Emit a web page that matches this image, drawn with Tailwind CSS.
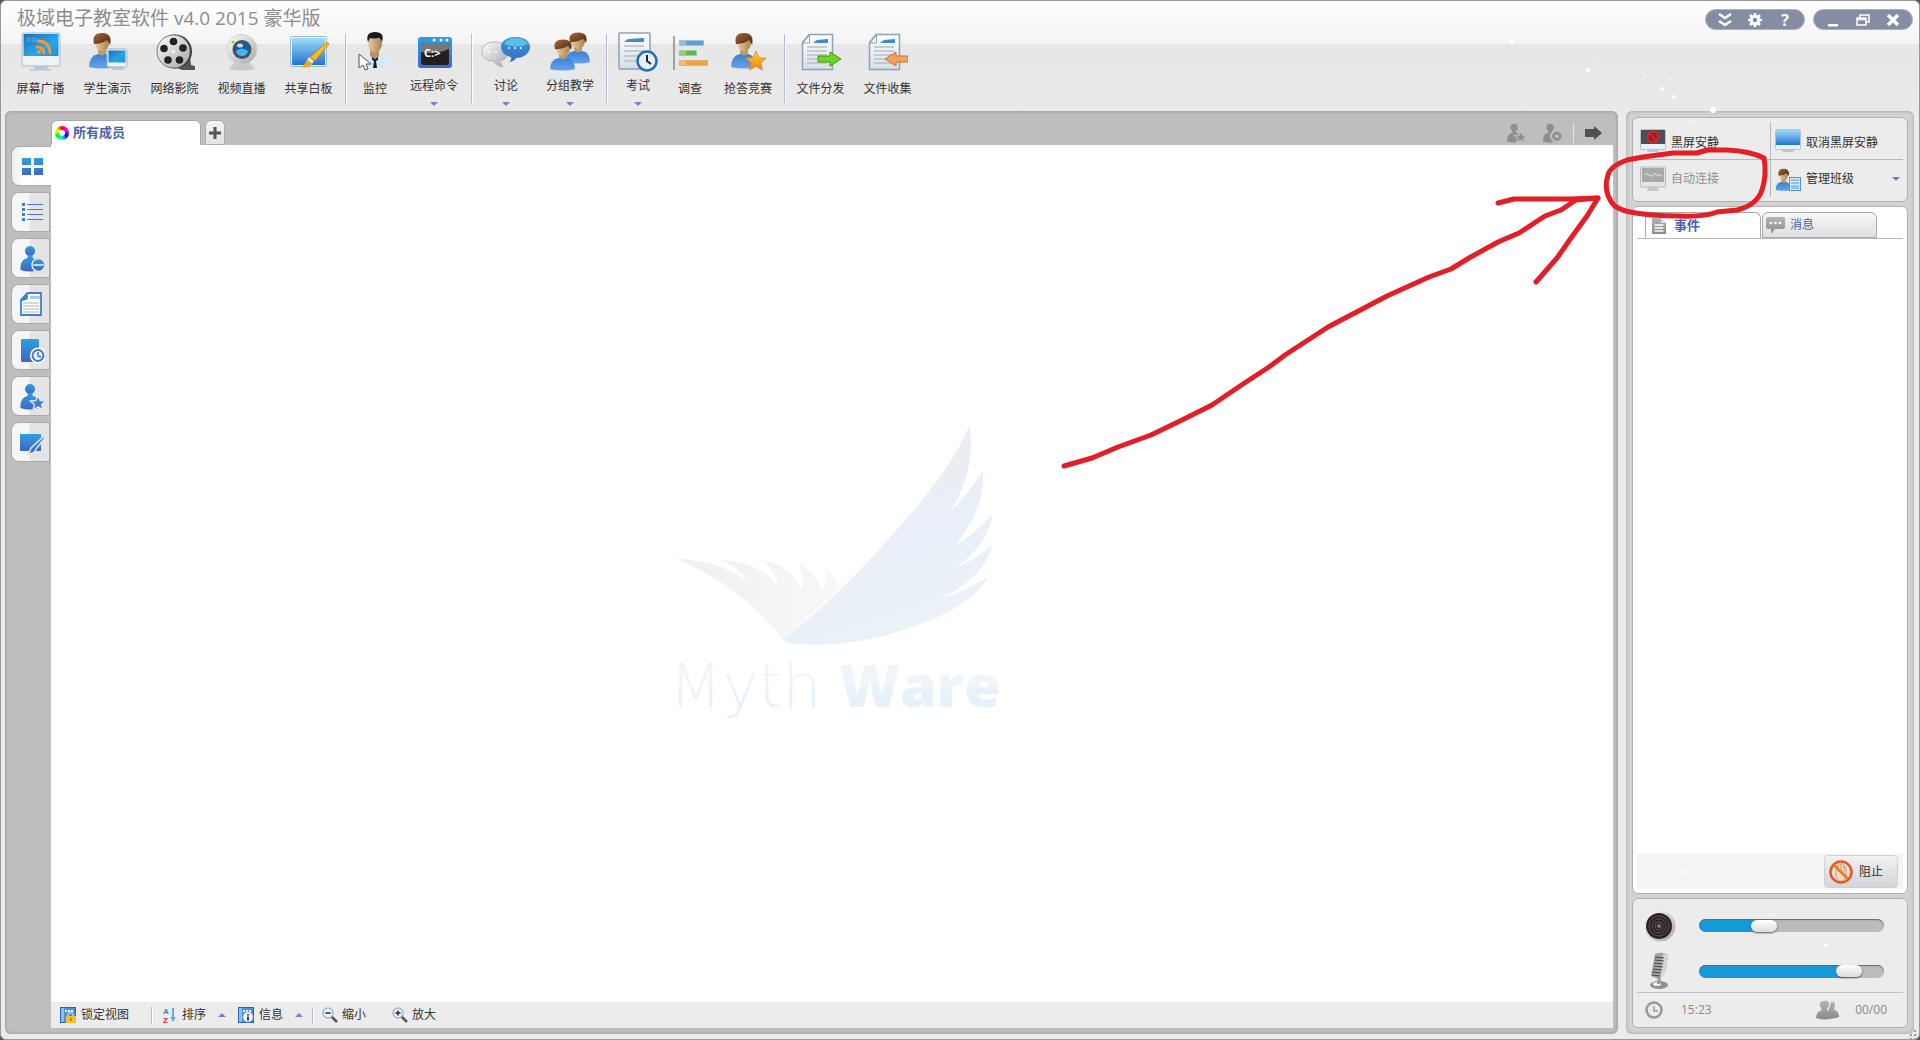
<!DOCTYPE html>
<html lang="zh-CN">
<head>
    <meta charset="UTF-8">
    <meta name="viewport" content="width=device-width, initial-scale=1.0">
    <title>极域电子教室软件 v4.0 2015 豪华版</title>
    <script src="https://cdn.jsdelivr.net/npm/@tailwindcss/browser@4"></script>
</head>
<body class="bg-[#555] font-['Open_Sans','Noto_Sans_CJK_SC',sans-serif] text-xs text-[#333]">

    <!-- shared gradients and icon parts -->
    <svg class="absolute w-0 h-0" aria-hidden="true">
        <defs>
            <linearGradient id="gBlue" x1="0" y1="0" x2="0" y2="1"><stop offset="0" stop-color="#2f9fe0"/><stop offset="1" stop-color="#3f68c4"/></linearGradient>
            <linearGradient id="gScreen" x1="0" y1="0" x2="0" y2="1"><stop offset="0" stop-color="#9fdcfb"/><stop offset="1" stop-color="#2173cf"/></linearGradient>
            <linearGradient id="gDark" x1="0" y1="0" x2="1" y2="1"><stop offset="0" stop-color="#1d6fb5"/><stop offset=".6" stop-color="#27a6ea"/><stop offset="1" stop-color="#1b8fdc"/></linearGradient>
            <linearGradient id="gShirt" x1="0" y1="0" x2="0" y2="1"><stop offset="0" stop-color="#3c7fd0"/><stop offset="1" stop-color="#62a4ec"/></linearGradient>
            <linearGradient id="gSkin" x1="0" y1="0" x2="1" y2="0"><stop offset="0" stop-color="#e8cda4"/><stop offset="1" stop-color="#a9814f"/></linearGradient>
            <linearGradient id="gHair" x1="0" y1="0" x2="1" y2="1"><stop offset="0" stop-color="#a4693a"/><stop offset="1" stop-color="#4a2510"/></linearGradient>
            <linearGradient id="gSilver" x1="0" y1="0" x2="1" y2="1"><stop offset="0" stop-color="#ffffff"/><stop offset="1" stop-color="#a3a6ab"/></linearGradient>
            <linearGradient id="gPaper" x1="0" y1="0" x2="0" y2="1"><stop offset="0" stop-color="#ffffff"/><stop offset="1" stop-color="#d3dfe8"/></linearGradient>
            <linearGradient id="gGold" x1="0" y1="0" x2="0" y2="1"><stop offset="0" stop-color="#ffd23c"/><stop offset="1" stop-color="#f0820f"/></linearGradient>
            <linearGradient id="gGray" x1="0" y1="0" x2="0" y2="1"><stop offset="0" stop-color="#b4b4b4"/><stop offset="1" stop-color="#8a8a8a"/></linearGradient>
            <g id="person">
                <path d="M1 37q0-11 9-13h8q8 2 8 13q-12 3-25 0z" fill="url(#gShirt)"/>
                <path d="M10 17h8v6q-4 5-8 0z" fill="#c19a68"/>
                <ellipse cx="14" cy="12.500" rx="7" ry="9" fill="url(#gSkin)"/>
                <path d="M6 14C4 6 8 3 14 3c7 0 10 4 8 12q-1-3-3-5q-5 4-13 4z" fill="url(#gHair)"/>
            </g>
            <g id="doc">
                <path d="M8 4.500h23.500v35h-30v-27z" fill="url(#gPaper)" stroke="#8da3b5" stroke-width="1.500"/>
                <path d="M8.500 5v8H2z" fill="#fff" stroke="#8da3b5"/>
                <path d="M12 13l4-3 11-1v4z" fill="#3d8dcb"/>
                <path d="M6 17h20M6 21h20M6 25h20M6 29h20M6 33h20" stroke="#b9c0c6" stroke-width="1.500"/>
            </g>
            <path id="star" d="M0-10 3-3.300l7.200.6-5.500 4.700L6.500 9 0 5.200-6.500 9l1.800-7-5.500-4.700 7.200-.6z"/>
            <g id="bust">
                <circle cx="11" cy="6" r="5"/>
                <path d="M8.500 10h5v3q5 1 6 5v7q-9 3-18 0q-1-10 7-12z"/>
            </g>
            <g id="arrowShape"><path d="M0 4h12V0l11 7-11 7v-4H0z"/></g>
        </defs>
    </svg>

    <div class="min-h-screen flex flex-col rounded-md border border-[#999] bg-[#ebebeb]">

        <!-- title bar and toolbar -->
        <header class="h-[110px] shrink-0 rounded-t-md bg-[linear-gradient(#ffffff_0,#f4f4f4_43px,#e7e7e7_43px,#e9e9e9_100%)]">
            <div class="flex justify-between h-[27px] pl-4 pr-[6px]">
                <h1 class="pt-px text-[19px] leading-8 text-[#8c8c8c]">极域电子教室软件 v4.0 2015 豪华版</h1>
                <div class="flex gap-2 pt-2 shrink-0">
                    <div class="flex items-center justify-around px-1 w-[100px] h-[21px] rounded-full bg-[#858da3] border border-[#a9b0cc]">
                        <button aria-label="收起"><svg class="w-4 h-4" viewBox="0 0 16 16" fill="none" stroke="#fff" stroke-width="2.500"><path d="M2 2l6 4 6-4M2 9l6 4 6-4"/></svg></button>
                        <button aria-label="设置"><svg class="w-4 h-4" viewBox="0 0 16 16"><circle cx="8" cy="8" r="3.700" fill="none" stroke="#fff" stroke-width="3"/><path d="M8 1v3M8 12v3M1 8h3M12 8h3M3 3l2 2M11 11l2 2M3 13l2-2M11 5l2-2" stroke="#fff" stroke-width="2.500"/></svg></button>
                        <button aria-label="帮助" class="w-4 text-base leading-4 font-bold text-white">?</button>
                    </div>
                    <div class="flex items-center justify-around px-1 w-[100px] h-[21px] rounded-full bg-[#858da3] border border-[#a9b0cc]">
                        <button aria-label="最小化"><svg class="w-4 h-4" viewBox="0 0 16 16"><path d="M3 12h10v2.500H3z" fill="#fff"/></svg></button>
                        <button aria-label="还原"><svg class="w-4 h-4" viewBox="0 0 16 16" fill="none" stroke="#fff" stroke-width="1.500"><path d="M5 6V3h9v7h-3"/><path d="M2 6h9v7H2zM2 7.500h9"/></svg></button>
                        <button aria-label="关闭"><svg class="w-4 h-4" viewBox="0 0 16 16"><path d="M3 3l10 10M13 3L3 13" stroke="#fff" stroke-width="3.500"/></svg></button>
                    </div>
                </div>
            </div>

            <nav class="flex pl-[6px] pt-[2px] whitespace-nowrap">
                <button class="w-[67px] flex flex-col items-center gap-[9px]">
                    <svg class="w-10 h-[42px]" viewBox="0 0 40 42"><path d="M14 34h12l1 5h3v1.500H9V39h4z" fill="#b7c9d6"/><rect x="1" y="3" width="38" height="33" rx="2" fill="#eef3f7" stroke="#a8bccb"/><rect x="2.500" y="4" width="35" height="22" fill="url(#gDark)"/><path d="M5 7h5v5H5zM11 7h4v5h-4z" fill="#fff" opacity=".15"/><g fill="none" stroke="#f19a3a" stroke-width="2.800" stroke-linecap="round"><path d="M17 11q11 0 12 12M16 17q6 0 7 6"/></g><circle cx="18" cy="22" r="2" fill="#f19a3a"/></svg>
                    <span class="leading-4">屏幕广播</span>
                </button>
                <button class="w-[67px] flex flex-col items-center gap-[9px]">
                    <svg class="w-10 h-[42px]" viewBox="0 0 40 42"><use href="#person"/><path d="M26 36h8l3 4H23z" fill="#bccbd7"/><rect x="19" y="19" width="20" height="18" rx="1.500" fill="#f0f4f8" stroke="#9fb3c4"/><rect x="20.500" y="20.500" width="17" height="12" fill="url(#gDark)"/></svg>
                    <span class="leading-4">学生演示</span>
                </button>
                <button class="w-[67px] flex flex-col items-center gap-[9px]">
                    <svg class="w-10 h-[42px]" viewBox="0 0 40 42"><path d="M22 38q10-2 13-12l1 9 4 1v4H27z" fill="#555"/><circle cx="20" cy="21.500" r="17" fill="#333"/><circle cx="18.500" cy="21.500" r="16.500" fill="url(#gSilver)" stroke="#777"/><g fill="#222"><circle cx="18.500" cy="11.500" r="3.800"/><circle cx="28" cy="18" r="3.800"/><circle cx="24.500" cy="30" r="3.800"/><circle cx="13" cy="30" r="3.800"/><circle cx="9" cy="18.500" r="3.800"/></g><circle cx="18.500" cy="21.500" r="1.500" fill="#fff"/></svg>
                    <span class="leading-4">网络影院</span>
                </button>
                <button class="w-[67px] flex flex-col items-center gap-[9px]">
                    <svg class="w-10 h-[42px]" viewBox="0 0 40 42"><path d="M12 33h16l5 6q-12 3-26 0z" fill="#c9cacd"/><circle cx="20" cy="19.500" r="15" fill="url(#gSilver)" stroke="#d2d2d2"/><circle cx="20" cy="19.500" r="9.500" fill="#4a5059"/><circle cx="20" cy="19.500" r="7" fill="#145f9f"/><path d="M14 21q6-5 12 0q-1 5-6 5t-6-5z" fill="#42b4f3"/><ellipse cx="18" cy="15.500" rx="3" ry="2" fill="#bcdcf2"/><circle cx="11" cy="12" r="1.500" fill="#6ee428"/></svg>
                    <span class="leading-4">视频直播</span>
                </button>
                <button class="w-[67px] flex flex-col items-center gap-[9px]">
                    <svg class="w-10 h-[42px]" viewBox="0 0 40 42"><rect x="1.500" y="6.500" width="36" height="30" rx="1" fill="#e8f2f8" stroke="#9dbbd0"/><rect x="3" y="8" width="33" height="27" fill="url(#gScreen)"/><path d="M38 12l2 2-14 17-5-4z" fill="#f9b81c" stroke="#b87a08" stroke-width=".7"/><path d="M20 27l5 4-2 3-5-4z" fill="#e8e4d8"/><path d="M18 30l5 4q-4 5-11 3q3-1 6-7z" fill="#f6a90f"/></svg>
                    <span class="leading-4">共享白板</span>
                </button>
                <div class="w-px h-[69px] mt-1 ml-[3px] mr-1 bg-[#b3bbdf] shadow-[1px_0_0_#fff]"></div>
                <button class="w-[50px] flex flex-col items-center gap-[9px]">
                    <svg class="w-10 h-[42px]" viewBox="0 0 40 42"><path d="M6 38q0-10 10-12h8q10 2 10 12z" fill="#d4e8f8"/><path d="M15 18h9v8q-4 5-9 0z" fill="#b8925f"/><path d="M17 27l3 2 3-2 0 3-2 1 1 7h-4l1-7-2-1z" fill="#1a1f2a"/><ellipse cx="20" cy="13" rx="7" ry="9.500" fill="url(#gSkin)"/><path d="M13 12q-3-10 7-10t7 10q-2-5-4-4-4 1-8 0z" fill="#1a1a1c"/><path d="M4 24v14l4-3 2 5 3-1-2-5h5z" fill="#fff" stroke="#555"/></svg>
                    <span class="leading-4">监控</span>
                </button>
                <button class="w-[68px] flex flex-col items-center">
                    <svg class="w-10 h-[42px]" viewBox="0 0 40 42"><rect x="4" y="7" width="34" height="31" rx="3" fill="url(#gBlue)"/><g fill="#fff"><circle cx="20" cy="10" r="1.500"/><circle cx="27" cy="10" r="1.500"/><circle cx="33" cy="10" r="1.500"/></g><rect x="7" y="13" width="28" height="22" rx="3" fill="#231f20"/><path d="M7 22v-6q0-3 3-3h22q3 0 3 3v3q-14 6-28 3z" fill="#777"/><text x="10" y="27" font-size="11" font-weight="700" fill="#fff" font-family="Open Sans, sans-serif">C:&gt;</text></svg>
                    <span class="mt-[6px] leading-4">远程命令</span>
                    <span class="mt-2 border-x-4 border-t-4 border-x-transparent border-t-[#7584bd]"></span>
                </button>
                <div class="w-px h-[69px] mt-1 ml-[3px] mr-[2px] bg-[#b3bbdf] shadow-[1px_0_0_#fff]"></div>
                <button class="w-[64px] flex flex-col items-center">
                    <svg class="w-[50px] h-[42px]" viewBox="0 0 50 42"><path d="M1 22c0-7 6-10 13-10s13 4 13 10-5 9-9 9l4 6q-7-1-9-6C6 31 1 28 1 22z" fill="url(#gSilver)" stroke="#b4b4bb"/><path d="M20 17c0-7 7-10 15-10s14 4 14 10-6 11-14 11q-1 3-7 4 3-2 2-5-10-2-10-10z" fill="url(#gBlue)"/><path d="M23 14q3-6 12-6t12 6q-12 5-24 0z" fill="#6fd0e8" opacity=".7"/><g fill="#fff"><circle cx="28" cy="18" r="1"/><circle cx="34" cy="18" r="1"/><circle cx="40" cy="18" r="1"/><circle cx="8" cy="22" r="1"/><circle cx="15" cy="22" r="1"/></g></svg>
                    <span class="mt-[6px] leading-4">讨论</span>
                    <span class="mt-2 border-x-4 border-t-4 border-x-transparent border-t-[#7584bd]"></span>
                </button>
                <button class="w-[64px] flex flex-col items-center">
                    <svg class="w-[42px] h-[42px]" viewBox="0 0 42 42"><g transform="translate(15)"><use href="#person" transform="scale(1 .87)"/></g><g transform="translate(0 7)"><use href="#person" transform="scale(1 .87)"/></g></svg>
                    <span class="mt-[6px] leading-4">分组教学</span>
                    <span class="mt-2 border-x-4 border-t-4 border-x-transparent border-t-[#7584bd]"></span>
                </button>
                <div class="w-px h-[69px] mt-1 ml-1 mr-[3px] bg-[#b3bbdf] shadow-[1px_0_0_#fff]"></div>
                <button class="w-[56px] flex flex-col items-center">
                    <svg class="w-10 h-[42px]" viewBox="0 0 40 42"><rect x="1" y="3" width="31" height="36" rx="1" fill="url(#gPaper)" stroke="#8da3b5" stroke-width="1.500"/><path d="M6 12l4-3 16-1v4z" fill="#3d8dcb"/><path d="M6 16h20M6 21h20M6 26h14M6 31h12" stroke="#b9c0c6" stroke-width="1.500"/><circle cx="29" cy="31" r="9.500" fill="#e3eff9" stroke="#2a6cae" stroke-width="2.500"/><path d="M29 25v6l4 3" fill="none" stroke="#223" stroke-width="2"/></svg>
                    <span class="mt-[6px] leading-4">考试</span>
                    <span class="mt-2 border-x-4 border-t-4 border-x-transparent border-t-[#7584bd]"></span>
                </button>
                <button class="w-[48px] flex flex-col items-center gap-[9px]">
                    <svg class="w-10 h-[42px]" viewBox="0 0 40 42"><path d="M4 6v34" stroke="#8a8a8a" stroke-width="1.500"/><rect x="9.500" y="10.500" width="24" height="5" fill="#5f9fd3" stroke="#9cc2e2"/><rect x="9.500" y="20.500" width="17" height="5" fill="#5db655" stroke="#9ad094"/><rect x="9.500" y="30.500" width="28" height="5" fill="#eda23c" stroke="#dcb47c"/><path d="M10 11h6v4h-6zM10 21h6v4h-6zM10 31h6v4h-6z" fill="#fff" opacity=".3"/></svg>
                    <span class="leading-4">调查</span>
                </button>
                <button class="w-[68px] flex flex-col items-center gap-[9px]">
                    <svg class="w-10 h-[42px]" viewBox="0 0 40 42"><use href="#person" x="2"/><use href="#star" x="28" y="31" fill="url(#gGold)" stroke="#e08a1a" stroke-width=".8"/></svg>
                    <span class="leading-4">抢答竞赛</span>
                </button>
                <div class="w-px h-[69px] mt-1 ml-[2px] mr-[2px] bg-[#b3bbdf] shadow-[1px_0_0_#fff]"></div>
                <button class="w-[67px] flex flex-col items-center gap-[9px]">
                    <svg class="w-10 h-[42px]" viewBox="0 0 40 42"><use href="#doc"/><use href="#arrowShape" x="17" y="22" fill="#6fd522" stroke="#3c9a10"/></svg>
                    <span class="leading-4">文件分发</span>
                </button>
                <button class="w-[67px] flex flex-col items-center gap-[9px]">
                    <svg class="w-10 h-[42px]" viewBox="0 0 40 42"><use href="#doc"/><g transform="translate(40 22) scale(-1 1)"><use href="#arrowShape" fill="#f3a163" stroke="#cf6f2c"/></g></svg>
                    <span class="leading-4">文件收集</span>
                </button>
            </nav>
        </header>

        <div class="flex-1 flex gap-2 pl-1 pr-[5px] pb-[5px]">

            <!-- member view -->
            <main class="flex-1 flex flex-col pr-[5px] pb-[6px] rounded-md bg-[#bebebe] shadow-[inset_0_0_3px_1px_#a0a0a0]">
                <div class="flex items-end h-[34px]">
                    <button class="flex items-center gap-1 ml-[46px] w-[150px] h-[25px] pl-[3px] pb-px rounded-t-md bg-white border border-b-0 border-[#a8a8a8] text-[13px] font-bold text-[#4a62ac]">
                        <span class="w-[14px] h-[14px] rounded-full p-1 bg-[conic-gradient(red,magenta,blue,cyan,lime,yellow,red)]"><span class="block w-full h-full rounded-full bg-white"></span></span>
                        所有成员
                    </button>
                    <button aria-label="添加" class="ml-[4px] w-[20px] h-[25px] rounded-t-md bg-linear-to-b from-[#f4f4f4] to-[#e2e2e2] border border-[#aaa] flex items-center justify-center">
                        <svg class="w-[14px] h-[14px]" viewBox="0 0 14 14"><path d="M7 1v12M1 7h12" stroke="#555" stroke-width="3"/></svg>
                    </button>
                    <div class="flex items-center gap-4 h-[25px] ml-auto mr-[11px]">
                        <button aria-label="保存班级"><svg class="w-5 h-5" viewBox="0 0 27 27" fill="#8e8e8e"><use href="#bust"/><use href="#star" transform="translate(20 19) scale(.8)" stroke="#bebebe" stroke-width="2"/></svg></button>
                        <button aria-label="设置班级"><svg class="w-5 h-5" viewBox="0 0 27 27" fill="#8e8e8e"><use href="#bust"/><circle cx="20" cy="18" r="4.500" fill="none" stroke="#bebebe" stroke-width="9"/><circle cx="20" cy="18" r="4.500" fill="#bebebe" stroke="#8e8e8e" stroke-width="3.500"/></svg></button>
                        <span class="w-px h-5 -mx-[5px] bg-[#e4e4e4]"></span>
                        <button aria-label="下一页"><svg class="w-[17px] h-[14px]" viewBox="0 0 17 14"><path d="M0 3h9V0l8 7-8 7v-3H0z" fill="#505050"/></svg></button>
                    </div>
                </div>

                <div class="flex-1 flex">
                    <aside class="w-[46px] shrink-0 pl-[6px] pt-px flex flex-col gap-[6px]">
                        <button aria-label="监控视图" class="w-[40px] h-10 pl-[6px] flex items-center rounded-l-lg bg-linear-to-r from-[#eee] to-white to-30% border border-r-0 border-[#aaa]"><svg class="w-[27px] h-[27px]" viewBox="0 0 27 27" fill="url(#gBlue)"><path d="M4 5h9v7H4zM16 5h9v7h-9zM4 15h9v7H4zM16 15h9v7h-9z"/></svg></button>
                        <button aria-label="列表视图" class="w-[39px] h-10 pl-[6px] flex items-center rounded-l-lg bg-linear-to-r from-[#f6f6f6] from-45% to-[#e4e4e4] to-50% border border-[#aaa]"><svg class="w-[27px] h-[27px]" viewBox="0 0 27 27" fill="#3f7fcf"><path d="M4 4h3v3H4zM4 9h3v3H4zM4 14h3v3H4zM4 19h3v3H4zM9 5h16v1H9zM9 10h16v1H9zM9 15h16v1H9zM9 20h16v1H9z"/></svg></button>
                        <button aria-label="策略" class="w-[39px] h-10 pl-[6px] flex items-center rounded-l-lg bg-linear-to-r from-[#f6f6f6] from-45% to-[#e4e4e4] to-50% border border-[#aaa]"><svg class="w-[27px] h-[27px]" viewBox="0 0 27 27" fill="url(#gBlue)"><use href="#bust" x="1"/><circle cx="20.500" cy="20" r="6.500" stroke="#e4e4e4" stroke-width="1.500"/><path d="M15.500 20h10" stroke="#fff" stroke-width="1.500"/></svg></button>
                        <button aria-label="报告" class="w-[39px] h-10 pl-[6px] flex items-center rounded-l-lg bg-linear-to-r from-[#f6f6f6] from-45% to-[#e4e4e4] to-50% border border-[#aaa]"><svg class="w-[27px] h-[27px]" viewBox="0 0 27 27"><path d="M10 2h13v22H3V9z" fill="#fff" stroke="#3f7fcf" stroke-width="1.800"/><path d="M2 9l7-8 1 6q-1 3-8 3z" fill="#2f86d4"/><path d="M12 5h10v3H12z" fill="#a9cbf0"/><path d="M5 12h16M5 15h16M5 18h16M5 21h16" stroke="#ccc" stroke-width="1.500"/></svg></button>
                        <button aria-label="历史" class="w-[39px] h-10 pl-[6px] flex items-center rounded-l-lg bg-linear-to-r from-[#f6f6f6] from-45% to-[#e4e4e4] to-50% border border-[#aaa]"><svg class="w-[27px] h-[27px]" viewBox="0 0 27 27"><rect x="3" y="2" width="18" height="23" rx="1" fill="url(#gBlue)"/><circle cx="20" cy="18.500" r="6.500" fill="#e9f1fa" stroke="#fff" stroke-width="3"/><circle cx="20" cy="18.500" r="5.500" fill="#e9f1fa" stroke="#3f74c8" stroke-width="1.800"/><path d="M20 15v4l3 1" fill="none" stroke="#3f74c8" stroke-width="1.500"/></svg></button>
                        <button aria-label="竞赛" class="w-[39px] h-10 pl-[6px] flex items-center rounded-l-lg bg-linear-to-r from-[#f6f6f6] from-45% to-[#e4e4e4] to-50% border border-[#aaa]"><svg class="w-[27px] h-[27px]" viewBox="0 0 27 27" fill="url(#gBlue)"><use href="#bust" x="1"/><use href="#star" transform="translate(20 20) scale(.75)" stroke="#e4e4e4" stroke-width="1.800"/></svg></button>
                        <button aria-label="白板" class="w-[39px] h-10 pl-[6px] flex items-center rounded-l-lg bg-linear-to-r from-[#f6f6f6] from-45% to-[#e4e4e4] to-50% border border-[#aaa]"><svg class="w-[27px] h-[27px]" viewBox="0 0 27 27" fill="url(#gBlue)"><path d="M2 5h21v17H2z"/><path d="M26 7l1 2-9 11q-1 5-8 5 2-3 3-6z" stroke="#e4e4e4" stroke-width="1.500"/></svg></button>
                    </aside>

                    <section class="flex-1 flex flex-col bg-white">
                        <div class="flex-1 flex items-center justify-center">
                            <!-- watermark -->
                            <svg class="w-[334px] h-[307px] overflow-visible" viewBox="75 63 1002 921">
                                <defs>
                                    <linearGradient id="wing" x1="0" y1="0" x2=".3" y2="1"><stop offset="0" stop-color="#e9ecef"/><stop offset=".6" stop-color="#e9eff8"/><stop offset="1" stop-color="#e9f2f7"/></linearGradient>
                                    <linearGradient id="wingLeft" x1="0" y1="0" x2="1" y2="0"><stop offset="0" stop-color="#efefef"/><stop offset="1" stop-color="#f8f8f8"/></linearGradient>
                                    <linearGradient id="wmText" x1="0" y1="0" x2="0" y2="1"><stop offset=".5" stop-color="#eff6fb"/><stop offset=".6" stop-color="#e6f1fa"/></linearGradient>
                                </defs>
                                <path fill="url(#wingLeft)" d="M108 479Q240 486 322 546Q300 505 243 482Q365 490 415 565Q410 520 368 484Q450 500 485 572Q495 530 474 492Q530 520 546 575Q562 540 556 508Q590 535 598 568L430 722Q290 550 108 479z"/>
                                <path fill="url(#wing)" d="M430 720Q560 620 700 470C850 310 950 180 987 80C1005 160 980 260 932 336Q990 280 1028 214C1038 290 1000 370 946 440Q1010 400 1058 346C1050 410 1000 470 946 508Q1010 480 1057 438C1040 510 980 560 902 598Q980 575 1043 534C1000 610 900 660 760 703C640 738 520 742 450 733Q436 730 430 720z"/>
                                <text x="88" y="924" font-size="184" font-weight="200" fill="url(#wmText)" font-family="DejaVu Sans Light, DejaVu Sans, sans-serif">Myth</text>
                                <text x="598" y="924" font-size="176" font-weight="900" fill="url(#wmText)" font-family="Open Sans, sans-serif">Ware</text>
                            </svg>
                        </div>
                        <div class="flex items-center h-[26px] pl-[9px] bg-[#ececec] whitespace-nowrap">
                            <button class="flex items-center gap-[5px]">
                                <svg class="w-4 h-4" viewBox="0 0 16 16"><rect x=".5" y=".5" width="15" height="15" fill="#4d8fe0" stroke="#2a62b8"/><path d="M1 1h3v14H1z" fill="#8cbcf2"/><path d="M5 3h2v2H5zM8 3h2v2H8zM11 3h2v2h-2z" fill="#fff"/><path d="M8 10V7q2.500-3 5 0v3" fill="none" stroke="#c9ccd0" stroke-width="1.500"/><rect x="6" y="9" width="10" height="7" fill="#f7bd2a"/><path d="M11 11v3" stroke="#7a5200"/></svg>
                                锁定视图
                            </button>
                            <span class="w-px h-[17px] ml-[22px] mr-[10px] bg-[#b3bbdf] shadow-[1px_0_0_#fff]"></span>
                            <button class="flex items-center gap-[5px]">
                                <svg class="w-[15px] h-5" viewBox="0 0 15 20"><text x="1" y="9" font-size="8" font-weight="700" fill="#2a7fc4" font-family="Liberation Sans, sans-serif">A</text><text x="1" y="18" font-size="8" font-weight="700" fill="#d4233c" font-family="Liberation Sans, sans-serif">Z</text><path d="M10 3h2v9h2l-3 5-3-5h2z" fill="#63abe0"/></svg>
                                排序
                                <span class="ml-[7px] border-x-4 border-b-4 border-x-transparent border-b-[#7584bd]"></span>
                            </button>
                            <button class="flex items-center gap-[5px] ml-3">
                                <svg class="w-4 h-4" viewBox="0 0 16 16"><rect x=".5" y=".5" width="15" height="15" fill="#4d8fe0" stroke="#2a62b8"/><path d="M1 1h3v14H1z" fill="#8cbcf2"/><path d="M5 3h2v2H5zM8 3h2v2H8zM11 3h2v2h-2z" fill="#fff"/><circle cx="10" cy="10" r="5" fill="#fff" stroke="#a8b4d8"/><path d="M10 7v1.500M10 9.500v4" stroke="#2a3c8c" stroke-width="2"/></svg>
                                信息
                                <span class="ml-[7px] border-x-4 border-b-4 border-x-transparent border-b-[#7584bd]"></span>
                            </button>
                            <span class="w-px h-[17px] mx-[9px] bg-[#b3bbdf] shadow-[1px_0_0_#fff]"></span>
                            <button class="flex items-center gap-1">
                                <svg class="w-4 h-4" viewBox="0 0 16 16"><path d="M9 9l6 6" stroke="#555" stroke-width="2.500"/><circle cx="6" cy="6" r="5" fill="#eaf3fb" stroke="#a3b4c4" stroke-width="1.500"/><path d="M3.500 6h5" stroke="#222" stroke-width="1.500"/></svg>
                                缩小
                            </button>
                            <button class="flex items-center gap-1 ml-[26px]">
                                <svg class="w-4 h-4" viewBox="0 0 16 16"><path d="M9 9l6 6" stroke="#555" stroke-width="2.500"/><circle cx="6" cy="6" r="5" fill="#eaf3fb" stroke="#a3b4c4" stroke-width="1.500"/><path d="M3.500 6h5M6 3.500v5" stroke="#222" stroke-width="1.500"/></svg>
                                放大
                            </button>
                        </div>
                    </section>
                </div>
            </main>

            <!-- right panel -->
            <aside class="w-72 shrink-0 flex flex-col gap-1 p-[6px] rounded-md bg-[#d2d2d2] shadow-[inset_0_0_3px_1px_#b2b2b2]">
                <div class="grid grid-cols-[134px_1fr] grid-rows-[38px_1fr] h-[85px] p-1 rounded-md border border-[#b0b0b0] bg-[#ececec]">
                    <button class="flex items-center gap-[5px] pl-[3px] pt-1 border-b border-r border-[#b9b9b9]">
                        <svg class="w-[26px] h-[26px] mb-1" viewBox="0 0 26 26"><path d="M9 20h8l2 4H7z" fill="#b9cad4"/><rect x=".5" y="1.500" width="25" height="20" rx="1" fill="#e8f3f8" stroke="#b0c4cf"/><rect x="1" y="2" width="24" height="14" fill="#4a5056"/><circle cx="13" cy="9" r="5.500" fill="#8f2026" stroke="#d8272c" stroke-width="2"/><path d="M9 5l8 8" stroke="#d8272c" stroke-width="2"/></svg>
                        黑屏安静
                    </button>
                    <button class="flex items-center gap-[5px] pl-1 pt-1 border-b border-[#b9b9b9]">
                        <svg class="w-[26px] h-[26px] mb-1" viewBox="0 0 26 26"><path d="M9 20h8l2 4H7z" fill="#b9cad4"/><rect x=".5" y="1.500" width="25" height="20" rx="1" fill="#e8f3f8" stroke="#b0c4cf"/><rect x="1" y="2" width="24" height="15" fill="url(#gScreen)"/></svg>
                        取消黑屏安静
                    </button>
                    <button disabled class="flex items-center gap-[5px] pl-[3px] border-r border-[#b9b9b9] text-[#8f8f8f]">
                        <svg class="w-[26px] h-[26px]" viewBox="0 0 26 26"><path d="M9 20h8l2 5H7z" fill="#c6c6c6"/><rect x=".5" y="1" width="25" height="20" rx="1" fill="#e4e4e4" stroke="#bcbcbc"/><rect x="2" y="2" width="22" height="14" fill="#a9a9a9"/><path d="M5 9q2-2 4 0t4 0 4 0 4-1" fill="none" stroke="#d4d4d4" stroke-width="1.500"/></svg>
                        自动连接
                    </button>
                    <button class="flex items-center gap-[5px] pl-1 pr-[3px]">
                        <svg class="w-[26px] h-[26px]" viewBox="0 0 26 26"><use href="#person" transform="translate(0 1) scale(.62)"/><rect x="14.500" y="11.500" width="11" height="13" fill="#d9ebfb" stroke="#4e94d8"/><path d="M16 14h8M16 17h8M16 20h8M16 22h8" stroke="#4e94d8"/></svg>
                        管理班级
                        <span class="ml-auto border-x-4 border-t-4 border-x-transparent border-t-[#7584bd]"></span>
                    </button>
                </div>

                <div class="flex-1 flex flex-col px-1 pt-[5px] pb-1 rounded-md border border-[#b0b0b0] bg-white">
                    <div class="flex gap-px pl-2 border-b border-[#b9b9b9]">
                        <button class="flex items-center gap-2 w-[116px] h-[26px] pl-[6px] rounded-tr-md border border-b-0 border-[#aaa] text-[13px] font-bold text-[#4a62ac]">
                            <svg class="w-[14px] h-4" viewBox="0 0 14 16"><path d="M0 0h9l5 5v11H0z" fill="url(#gGray)"/><path d="M9 0v5h5" fill="#ddd"/><path d="M2.500 7h9M2.500 10h9M2.500 13h9" stroke="#fff" stroke-width="1.500"/></svg>
                            事件
                        </button>
                        <button class="flex items-center gap-[5px] w-[115px] h-[26px] pl-[3px] rounded-t-md border border-[#aaa] bg-linear-to-b from-[#f6f6f6] to-[#e0e0e4] text-[#4a62ac]">
                            <svg class="w-[19px] h-[17px]" viewBox="0 0 19 17"><path d="M2 0h15q2 0 2 2v8q0 2-2 2H9l-4 5v-5H2q-2 0-2-2V2q0-2 2-2z" fill="url(#gGray)"/><g fill="#fff"><circle cx="5" cy="6" r="1.300"/><circle cx="9.500" cy="6" r="1.300"/><circle cx="14" cy="6" r="1.300"/></g></svg>
                            消息
                        </button>
                    </div>
                    <div class="flex-1"></div>
                    <div class="flex justify-end h-[35px] pr-[5px] bg-[#f4f4f4]">
                        <button class="flex items-center gap-[6px] w-[74px] h-[33px] mt-px pl-1 rounded border border-[#d0d0d4] bg-linear-to-b from-[#f2f2f4] to-[#d3d4d9]">
                            <svg class="w-6 h-6" viewBox="0 0 24 24"><path d="M7 11V7q1-2 2 0V5q1-2 3 0V4q2-1 3 1v2q2-1 2 1v8q-1 5-5 5t-5-6z" fill="#f0dcc4" stroke="#b08a68" stroke-width=".7"/><path d="M9 6v6M12 5v7M15 6v6" stroke="#b08a68" stroke-width=".7"/><circle cx="12" cy="12" r="10.500" fill="none" stroke="#e8571c" stroke-width="2.500"/><path d="M5 5l14 14" stroke="#ee7a1c" stroke-width="2.500"/></svg>
                            阻止
                        </button>
                    </div>
                </div>

                <div class="h-[130px] px-1 rounded-md border border-[#b0b0b0] bg-[#ececec] text-[#8a8a8a]">
                    <div class="flex items-center h-[53px] pl-[6px] pr-[19px]">
                        <svg class="w-[34px] h-8" viewBox="0 0 34 32"><circle cx="17" cy="16" r="15.500" fill="url(#gSilver)"/><circle cx="16" cy="16" r="13" fill="#2b2423"/><g fill="none" stroke="#5a5250"><circle cx="16" cy="16" r="10"/><circle cx="16" cy="16" r="7"/><circle cx="16" cy="16" r="4"/></g><circle cx="16" cy="16" r="2" fill="#777"/></svg>
                        <input type="range" aria-label="音量" min="0" max="100" value="33" class="flex-1 ml-[22px] h-[13px] appearance-none rounded-full bg-[linear-gradient(to_right,#149ad8_36%,#bbbbbb_36%)] shadow-[inset_0_1px_1px_#666] [&::-webkit-slider-thumb]:appearance-none [&::-webkit-slider-thumb]:w-[26px] [&::-webkit-slider-thumb]:h-3 [&::-webkit-slider-thumb]:rounded-full [&::-webkit-slider-thumb]:bg-linear-to-b [&::-webkit-slider-thumb]:from-white [&::-webkit-slider-thumb]:to-[#ddd] [&::-webkit-slider-thumb]:shadow-[0_1px_2px_#555]">
                    </div>
                    <div class="flex items-center h-[41px] pl-[6px] pr-[19px] pb-[2px] border-b border-[#c0c0c0]">
                        <svg class="w-[34px] h-[38px]" viewBox="0 0 34 38"><ellipse cx="16" cy="33" rx="9" ry="4" fill="#909090"/><ellipse cx="14" cy="32" rx="4" ry="2" fill="#eee"/><path d="M15 25l3 1-1 6h-3z" fill="#999"/><path d="M12 2q6-3 13 1l-2 15q-2 7-8 9l-7-3z" fill="#a4a4a4"/><path d="M20 2l5 1-2 15q-2 6-6 8z" fill="#d6d6d6"/><path d="M12 5l9 1M12 8l9 1M11 11l9 1M11 14l9 1M10 17l9 1M9 20l9 1M9 23l8 1" stroke="#444" stroke-width="1.200"/></svg>
                        <input type="range" aria-label="麦克风" min="0" max="100" value="86" class="flex-1 ml-[22px] h-[13px] appearance-none rounded-full bg-[linear-gradient(to_right,#149ad8_80%,#bbbbbb_80%)] shadow-[inset_0_1px_1px_#666] [&::-webkit-slider-thumb]:appearance-none [&::-webkit-slider-thumb]:w-[26px] [&::-webkit-slider-thumb]:h-3 [&::-webkit-slider-thumb]:rounded-full [&::-webkit-slider-thumb]:bg-linear-to-b [&::-webkit-slider-thumb]:from-white [&::-webkit-slider-thumb]:to-[#ddd] [&::-webkit-slider-thumb]:shadow-[0_1px_2px_#555]">
                    </div>
                    <div class="flex items-center h-[34px] pl-2 pr-4">
                        <svg class="w-[18px] h-[18px]" viewBox="0 0 18 18" fill="none" stroke="#999"><circle cx="9" cy="9" r="7.500" stroke-width="2.500"/><path d="M9 5v5h4" stroke-width="1.500"/></svg>
                        <span class="ml-[18px]">15:23</span>
                        <svg class="w-[23px] h-5 ml-auto mr-4" viewBox="0 0 23 20" fill="url(#gGray)"><path d="M15 2q4-1 4 3l-1 5q5 1 5 6v1q-8 3-12 0z"/><path d="M8 1q5-1 5 4l-2 5q6 2 6 8-8 3-17 0 0-6 6-8L4 6q-1-5 4-5z"/></svg>
                        <span>00/00</span>
                    </div>
                </div>
            </aside>
        </div>
    </div>

    <!-- sparkles and red pen marks over the window -->
    <svg class="absolute inset-0 w-full h-full pointer-events-none" viewBox="0 0 1920 1040" preserveAspectRatio="none">
        <g fill="#fff">
            <circle cx="1496" cy="35" r="1"/><circle cx="1501" cy="32" r="1"/><circle cx="1512" cy="42" r="2"/><circle cx="1588" cy="70" r="2"/><circle cx="1594" cy="64" r="1"/><circle cx="1645" cy="75" r="1"/><circle cx="1670" cy="79" r="1"/><circle cx="1662" cy="89" r="2"/><circle cx="1674" cy="97" r="2"/><circle cx="1713" cy="110" r="3"/><circle cx="1693" cy="121" r="1"/><circle cx="1693" cy="130" r="1"/><circle cx="1679" cy="134" r="1"/><circle cx="1683" cy="872" r="2"/><circle cx="1770" cy="915" r="1"/><circle cx="1680" cy="944" r="1"/><circle cx="1707" cy="942" r="1"/><circle cx="1826" cy="945" r="2"/>
        </g>
        <g fill="none" stroke="#e31e26" stroke-width="5" stroke-linecap="round" stroke-linejoin="round">
            <path d="M1064 466L1092 458L1118 447L1151 435L1182 420L1212 405L1243 384L1269 367L1285 355L1328 327L1387 296L1429 277L1451 269L1469 258L1498 242L1519 233L1545 216L1561 210L1576 200L1598 198"/>
            <path d="M1498 203L1514 199L1569 199L1598 198L1587 216L1571 238L1557 258L1536 282"/>
            <path d="M1697 153L1673 153L1643 157L1627 160Q1610 166 1608 175Q1603 190 1612 203Q1616 209 1630 212Q1650 216 1680 216Q1705 217 1717 212L1737 210Q1757 205 1762 190Q1767 175 1764 158Q1750 151 1727 150L1707 150L1697 153"/>
        </g>
        <g fill="#999"><path d="M1914 1030h2v2h-2zM1914 1034h2v2h-2zM1910 1034h2v2h-2zM1914 1038h2v2h-2zM1910 1038h2v2h-2z"/></g>
    </svg>
</body>
</html>
